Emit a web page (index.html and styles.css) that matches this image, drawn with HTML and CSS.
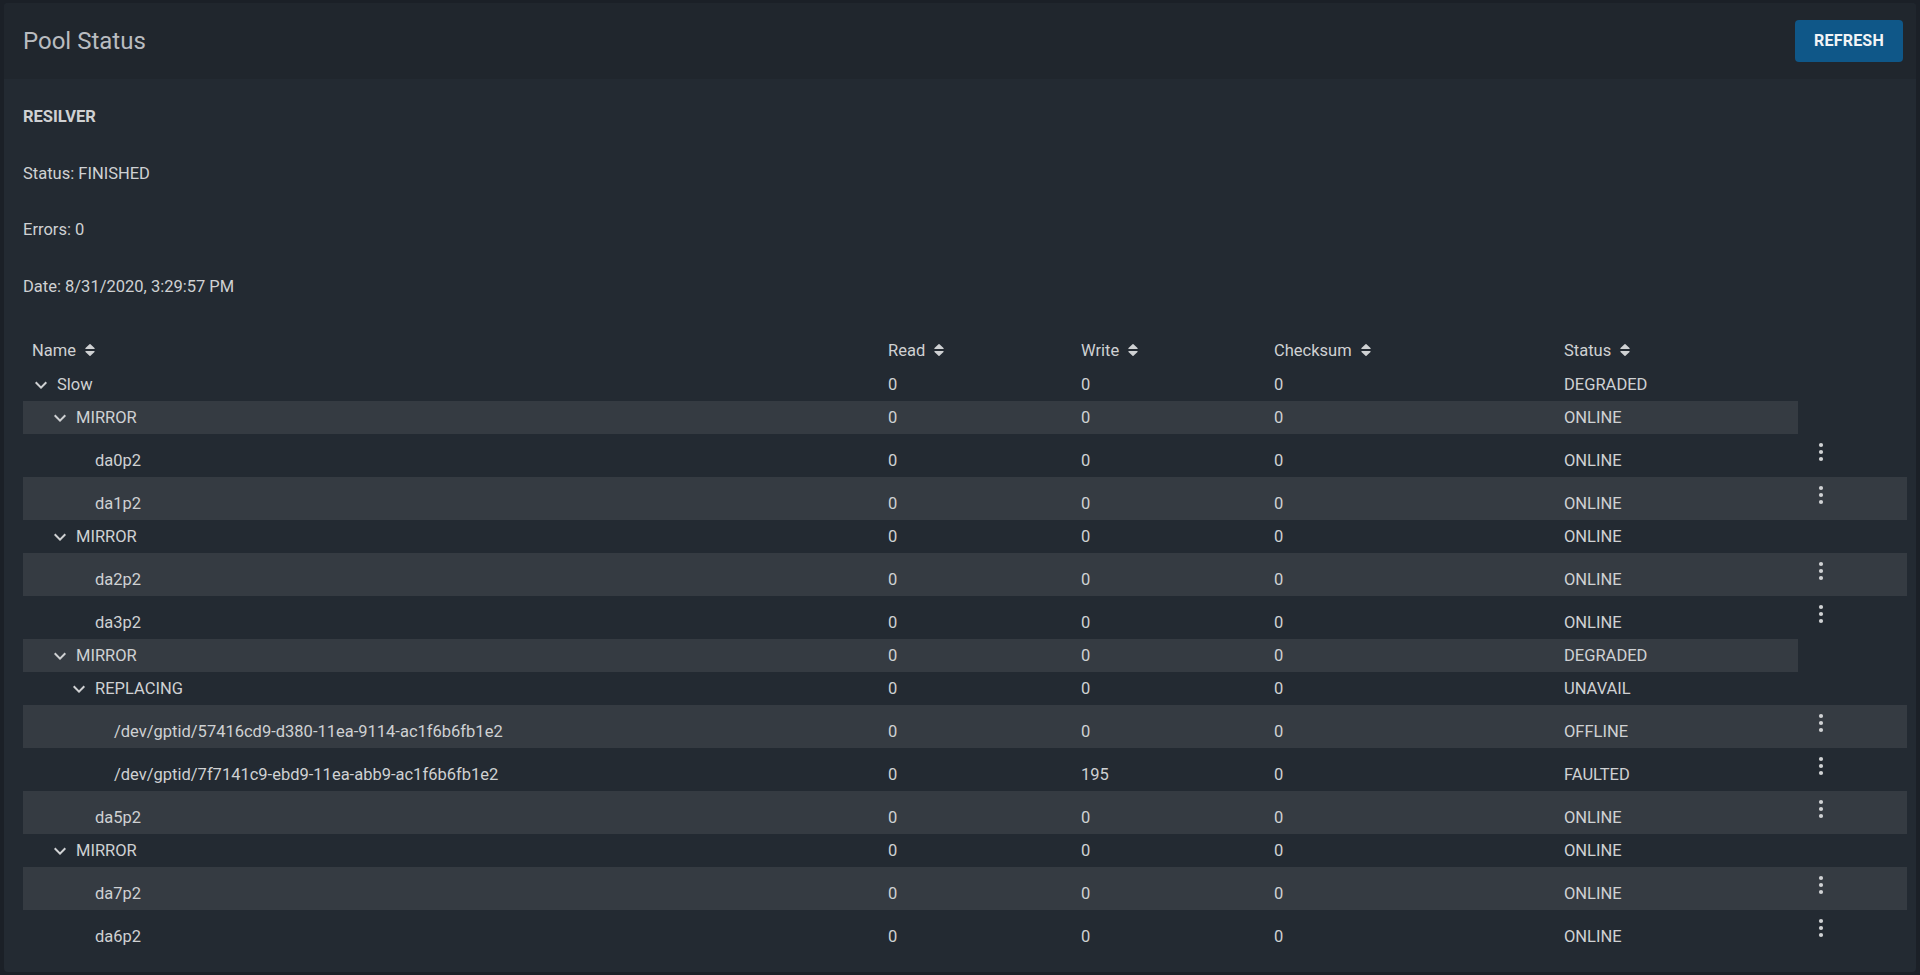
FILE: index.html
```html
<!DOCTYPE html>
<html lang="en">
<head>
<meta charset="utf-8">
<title>Pool Status</title>
<link rel="stylesheet" href="styles.css">
</head>
<body>
<div class="card">
  <div class="card-header">
    <h1 class="title">Pool Status</h1>
    <button class="btn-refresh">REFRESH</button>
  </div>
  <div class="card-body">
    <div class="scan">
      <div class="scan-line scan-title">RESILVER</div>
      <div class="scan-line">Status: FINISHED</div>
      <div class="scan-line">Errors: 0</div>
      <div class="scan-line">Date: 8/31/2020, 3:29:57 PM</div>
    </div>
    <table class="pool-table">
      <colgroup>
        <col class="c-name"><col class="c-num"><col class="c-num"><col class="c-sum"><col class="c-status"><col class="c-act">
      </colgroup>
      <thead>
        <tr>
          <th><span class="th-in">Name <svg class="sort" viewBox="0 0 10 12"><path d="M1 5h8c.6 0 .9-.6.5-1L5.5.3a.7.7 0 0 0-1 0L.5 4c-.4.4-.1 1 .5 1z"/><path d="M1 7h8c.6 0 .9.6.5 1l-4 3.7a.7.7 0 0 1-1 0L.5 8c-.4-.4-.1-1 .5-1z"/></svg></span></th>
          <th><span class="th-in">Read <svg class="sort" viewBox="0 0 10 12"><path d="M1 5h8c.6 0 .9-.6.5-1L5.5.3a.7.7 0 0 0-1 0L.5 4c-.4.4-.1 1 .5 1z"/><path d="M1 7h8c.6 0 .9.6.5 1l-4 3.7a.7.7 0 0 1-1 0L.5 8c-.4-.4-.1-1 .5-1z"/></svg></span></th>
          <th><span class="th-in">Write <svg class="sort" viewBox="0 0 10 12"><path d="M1 5h8c.6 0 .9-.6.5-1L5.5.3a.7.7 0 0 0-1 0L.5 4c-.4.4-.1 1 .5 1z"/><path d="M1 7h8c.6 0 .9.6.5 1l-4 3.7a.7.7 0 0 1-1 0L.5 8c-.4-.4-.1-1 .5-1z"/></svg></span></th>
          <th><span class="th-in">Checksum <svg class="sort" viewBox="0 0 10 12"><path d="M1 5h8c.6 0 .9-.6.5-1L5.5.3a.7.7 0 0 0-1 0L.5 4c-.4.4-.1 1 .5 1z"/><path d="M1 7h8c.6 0 .9.6.5 1l-4 3.7a.7.7 0 0 1-1 0L.5 8c-.4-.4-.1-1 .5-1z"/></svg></span></th>
          <th><span class="th-in">Status <svg class="sort" viewBox="0 0 10 12"><path d="M1 5h8c.6 0 .9-.6.5-1L5.5.3a.7.7 0 0 0-1 0L.5 4c-.4.4-.1 1 .5 1z"/><path d="M1 7h8c.6 0 .9.6.5 1l-4 3.7a.7.7 0 0 1-1 0L.5 8c-.4-.4-.1-1 .5-1z"/></svg></span></th>
          <th></th>
        </tr>
      </thead>
      <tbody>
        <tr class="grp">
          <td><div class="tree d0"><svg class="chev" viewBox="0 0 24 24"><path d="M16.59 8.59L12 13.17 7.41 8.59 6 10l6 6 6-6z"/></svg>Slow</div></td>
          <td>0</td><td>0</td><td>0</td><td>DEGRADED</td>
        </tr>
        <tr class="grp">
          <td><div class="tree d1"><svg class="chev" viewBox="0 0 24 24"><path d="M16.59 8.59L12 13.17 7.41 8.59 6 10l6 6 6-6z"/></svg>MIRROR</div></td>
          <td>0</td><td>0</td><td>0</td><td>ONLINE</td>
        </tr>
        <tr class="leaf">
          <td><div class="tree d2"><span class="spacer"></span>da0p2</div></td>
          <td>0</td><td>0</td><td>0</td><td>ONLINE</td>
          <td class="act"><svg class="dots" viewBox="0 0 24 24"><circle cx="12" cy="5" r="2.1"/><circle cx="12" cy="12" r="2.1"/><circle cx="12" cy="19" r="2.1"/></svg></td>
        </tr>
        <tr class="leaf">
          <td><div class="tree d2"><span class="spacer"></span>da1p2</div></td>
          <td>0</td><td>0</td><td>0</td><td>ONLINE</td>
          <td class="act"><svg class="dots" viewBox="0 0 24 24"><circle cx="12" cy="5" r="2.1"/><circle cx="12" cy="12" r="2.1"/><circle cx="12" cy="19" r="2.1"/></svg></td>
        </tr>
        <tr class="grp">
          <td><div class="tree d1"><svg class="chev" viewBox="0 0 24 24"><path d="M16.59 8.59L12 13.17 7.41 8.59 6 10l6 6 6-6z"/></svg>MIRROR</div></td>
          <td>0</td><td>0</td><td>0</td><td>ONLINE</td>
        </tr>
        <tr class="leaf">
          <td><div class="tree d2"><span class="spacer"></span>da2p2</div></td>
          <td>0</td><td>0</td><td>0</td><td>ONLINE</td>
          <td class="act"><svg class="dots" viewBox="0 0 24 24"><circle cx="12" cy="5" r="2.1"/><circle cx="12" cy="12" r="2.1"/><circle cx="12" cy="19" r="2.1"/></svg></td>
        </tr>
        <tr class="leaf">
          <td><div class="tree d2"><span class="spacer"></span>da3p2</div></td>
          <td>0</td><td>0</td><td>0</td><td>ONLINE</td>
          <td class="act"><svg class="dots" viewBox="0 0 24 24"><circle cx="12" cy="5" r="2.1"/><circle cx="12" cy="12" r="2.1"/><circle cx="12" cy="19" r="2.1"/></svg></td>
        </tr>
        <tr class="grp">
          <td><div class="tree d1"><svg class="chev" viewBox="0 0 24 24"><path d="M16.59 8.59L12 13.17 7.41 8.59 6 10l6 6 6-6z"/></svg>MIRROR</div></td>
          <td>0</td><td>0</td><td>0</td><td>DEGRADED</td>
        </tr>
        <tr class="grp">
          <td><div class="tree d2"><svg class="chev" viewBox="0 0 24 24"><path d="M16.59 8.59L12 13.17 7.41 8.59 6 10l6 6 6-6z"/></svg>REPLACING</div></td>
          <td>0</td><td>0</td><td>0</td><td>UNAVAIL</td>
        </tr>
        <tr class="leaf">
          <td><div class="tree d3"><span class="spacer"></span>/dev/gptid/57416cd9-d380-11ea-9114-ac1f6b6fb1e2</div></td>
          <td>0</td><td>0</td><td>0</td><td>OFFLINE</td>
          <td class="act"><svg class="dots" viewBox="0 0 24 24"><circle cx="12" cy="5" r="2.1"/><circle cx="12" cy="12" r="2.1"/><circle cx="12" cy="19" r="2.1"/></svg></td>
        </tr>
        <tr class="leaf">
          <td><div class="tree d3"><span class="spacer"></span>/dev/gptid/7f7141c9-ebd9-11ea-abb9-ac1f6b6fb1e2</div></td>
          <td>0</td><td>195</td><td>0</td><td>FAULTED</td>
          <td class="act"><svg class="dots" viewBox="0 0 24 24"><circle cx="12" cy="5" r="2.1"/><circle cx="12" cy="12" r="2.1"/><circle cx="12" cy="19" r="2.1"/></svg></td>
        </tr>
        <tr class="leaf">
          <td><div class="tree d2"><span class="spacer"></span>da5p2</div></td>
          <td>0</td><td>0</td><td>0</td><td>ONLINE</td>
          <td class="act"><svg class="dots" viewBox="0 0 24 24"><circle cx="12" cy="5" r="2.1"/><circle cx="12" cy="12" r="2.1"/><circle cx="12" cy="19" r="2.1"/></svg></td>
        </tr>
        <tr class="grp">
          <td><div class="tree d1"><svg class="chev" viewBox="0 0 24 24"><path d="M16.59 8.59L12 13.17 7.41 8.59 6 10l6 6 6-6z"/></svg>MIRROR</div></td>
          <td>0</td><td>0</td><td>0</td><td>ONLINE</td>
        </tr>
        <tr class="leaf">
          <td><div class="tree d2"><span class="spacer"></span>da7p2</div></td>
          <td>0</td><td>0</td><td>0</td><td>ONLINE</td>
          <td class="act"><svg class="dots" viewBox="0 0 24 24"><circle cx="12" cy="5" r="2.1"/><circle cx="12" cy="12" r="2.1"/><circle cx="12" cy="19" r="2.1"/></svg></td>
        </tr>
        <tr class="leaf">
          <td><div class="tree d2"><span class="spacer"></span>da6p2</div></td>
          <td>0</td><td>0</td><td>0</td><td>ONLINE</td>
          <td class="act"><svg class="dots" viewBox="0 0 24 24"><circle cx="12" cy="5" r="2.1"/><circle cx="12" cy="12" r="2.1"/><circle cx="12" cy="19" r="2.1"/></svg></td>
        </tr>
      </tbody>
    </table>
  </div>
</div>
</body>
</html>
```
FILE: styles.css
```css
* { box-sizing: border-box; }
html, body { height: 100%; }
body {
  margin: 0;
  padding: 3px 4px;
  background: #1b2027;
  font-family: Roboto, "Liberation Sans", sans-serif;
  font-size: 16.5px;
  color: #cfd1d3;
}
.card {
  background: #232a32;
  border-radius: 4px;
  height: 969px;
  overflow: hidden;
}
.card-header {
  height: 76px;
  background: #20262d;
  display: flex;
  align-items: center;
  justify-content: space-between;
  padding: 0 13px 0 19px;
}
.title {
  margin: 0;
  font-size: 24px;
  font-weight: 400;
  color: #b9bcc0;
  line-height: 28px;
}
.btn-refresh {
  width: 108px;
  height: 42px;
  margin-top: -1px;
  border: none;
  border-radius: 4px;
  background: #0f5788;
  color: #f2f4f6;
  font-family: Roboto, "Liberation Sans", sans-serif;
  font-size: 16px;
  font-weight: 700;
  letter-spacing: 0.2px;
  padding: 0;
}
.card-body {
  padding: 28px 9px 18px 19px;
}
.scan {
  display: flex;
  flex-direction: column;
  gap: 36.5px;
}
.scan-line {
  line-height: 20px;
}
.scan-title { font-weight: 700; }
.pool-table {
  margin-top: 38px;
  width: 1884px;
  border-collapse: collapse;
  table-layout: fixed;
}
.c-name { width: 856px; }
.c-num { width: 193px; }
.c-sum { width: 290px; }
.c-status { width: 243px; }
.c-act { width: 109px; }
th {
  text-align: left;
  font-weight: 400;
  padding: 6px 9px 8px;
  line-height: 19px;
  height: 33.5px;
}
.th-in {
  display: inline-flex;
  align-items: center;
  white-space: nowrap;
}
.sort {
  width: 10px;
  height: 12px;
  margin-left: 9px;
  fill: #cfd1d3;
}
td {
  padding: 0 9px;
  line-height: 19px;
  white-space: nowrap;
  vertical-align: top;
}
.grp td { padding-top: 7px; padding-bottom: 7px; }
.leaf td { padding-top: 17px; padding-bottom: 7px; }
.leaf td.act { padding: 6px 0 0 11px; }
tbody tr:nth-child(even) td { background: #353b42; }
.tree {
  display: flex;
  align-items: center;
  height: 19px;
}
.d1 { padding-left: 19px; }
.d2 { padding-left: 38px; }
.d3 { padding-left: 57px; }
.chev {
  width: 24px;
  height: 24px;
  margin-left: -3px;
  margin-right: 4px;
  flex: none;
  fill: #cfd1d3;
}
.spacer {
  width: 25px;
  flex: none;
}
.dots {
  display: block;
  width: 24px;
  height: 24px;
  fill: #d0d2d4;
}
```
